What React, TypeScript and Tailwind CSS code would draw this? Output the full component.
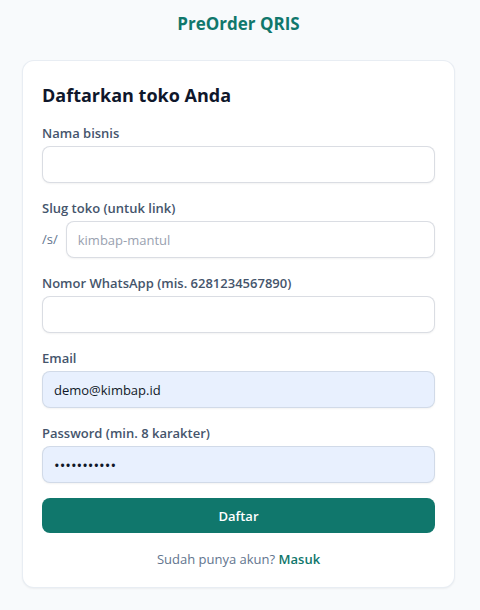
import { useState } from "react"
import type { ComponentProps, FormEvent } from "react"

interface FieldProps extends ComponentProps<"input"> {
  id: string
  label: string
  prefix?: string
  filled?: boolean
}

function Field({ id, label, prefix, filled, ...props }: FieldProps) {
  return (
    <div>
      <label htmlFor={id} className="mb-[3px] block text-[13px] leading-5 font-semibold text-slate-600">
        {label}
      </label>
      <div className="flex items-center gap-2">
        {prefix && <span className="text-[13px] text-slate-500">{prefix}</span>}
        <input
          id={id}
          name={id}
          className={`h-[37px] w-full min-w-0 rounded-lg border px-[11px] text-gray-900 shadow-xs outline-none placeholder:text-gray-400 focus:border-teal-700 ${
            filled ? "border-slate-300/80 bg-[#e8f0fe]" : "border-gray-300/80 bg-white"
          } ${props.type === "password" ? "text-[15px] text-black" : "text-[13px]"}`}
          {...props}
        />
      </div>
    </div>
  )
}

export default function App() {
  const [email, setEmail] = useState("demo@kimbap.id")
  const [password, setPassword] = useState("rahasia1234")

  const handleSubmit = (e: FormEvent) => {
    e.preventDefault()
  }

  return (
    <main className="min-h-screen bg-slate-50 pt-2.5 pr-[25px] pb-5 pl-[22px] font-['Open_Sans','Noto_Sans',sans-serif]">
      <div className="mx-auto max-w-md">
        {/* Brand */}
        <a href="#" className="mb-[22px] block text-center text-[17px] leading-7 font-bold text-[#10776c]">
          PreOrder QRIS
        </a>

        {/* Register card */}
        <div className="rounded-xl border border-slate-200/80 bg-white px-[19px] pt-5 pb-[18px] shadow-xs">
          <h1 className="mb-3.5 text-lg leading-7 font-bold text-slate-900">Daftarkan toko Anda</h1>
          <form onSubmit={handleSubmit} className="flex flex-col gap-[15px]">
            <Field id="business" label="Nama bisnis" type="text" />
            <Field id="slug" label="Slug toko (untuk link)" type="text" prefix="/s/" placeholder="kimbap-mantul" />
            <Field id="whatsapp" label="Nomor WhatsApp (mis. 6281234567890)" type="tel" />
            <Field
              id="email"
              label="Email"
              type="email"
              filled
              value={email}
              onChange={(e) => setEmail(e.target.value)}
            />
            <Field
              id="password"
              label="Password (min. 8 karakter)"
              type="password"
              filled
              value={password}
              onChange={(e) => setPassword(e.target.value)}
            />
            <button
              type="submit"
              className="h-[35px] w-full rounded-lg bg-[#10776c] text-[13px] leading-5 font-semibold text-white"
            >
              Daftar
            </button>
          </form>
          <p className="mt-4 text-center text-[13px] leading-5 text-slate-500">
            Sudah punya akun?{" "}
            <a href="#" className="font-semibold text-[#10776c]">
              Masuk
            </a>
          </p>
        </div>
      </div>
    </main>
  )
}
